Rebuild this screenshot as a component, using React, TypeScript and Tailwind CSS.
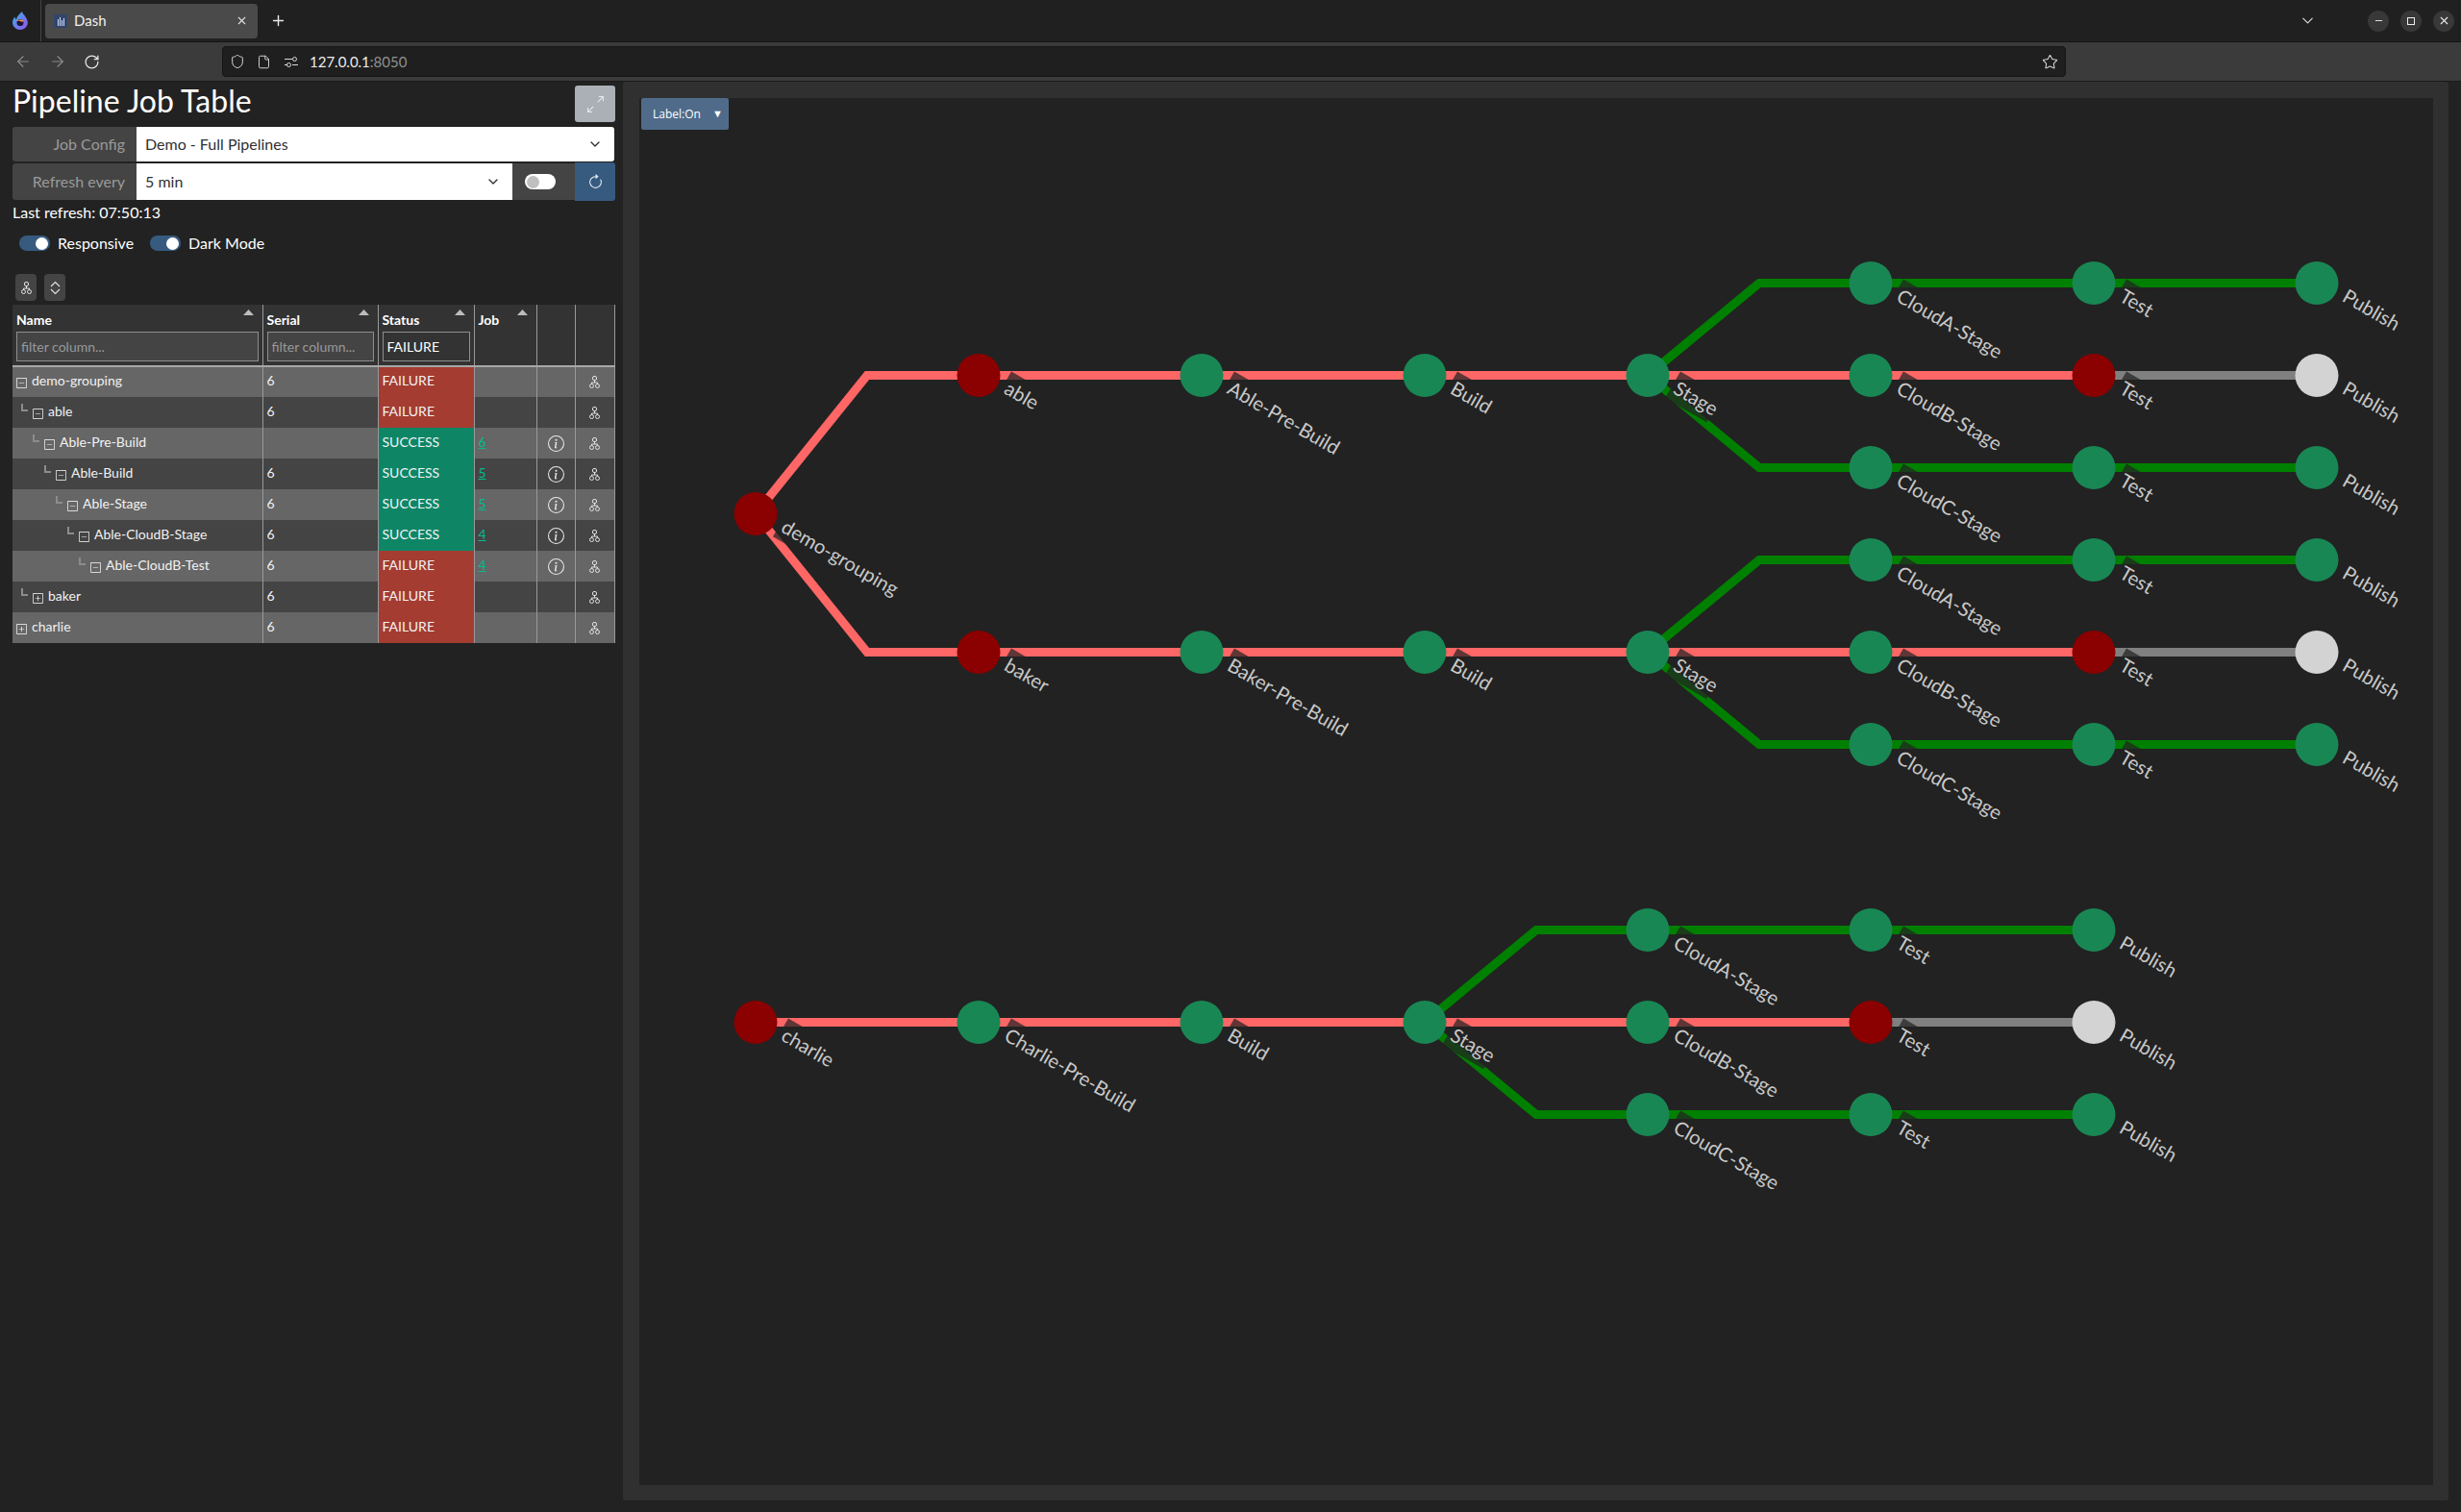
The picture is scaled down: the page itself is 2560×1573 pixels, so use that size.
import React from "react";
import { ArrowLeft, ArrowRight, ChevronDown, File, Minus, Plus, RotateCw, Shield, Star, X } from "lucide-react";
import { BsArrowClockwise, BsArrowsAngleExpand, BsDashSquare, BsInfoCircle, BsPlusSquare } from "react-icons/bs";

type Row = { name: string; depth: number; open: boolean; serial: string; status: "FAILURE" | "SUCCESS"; job?: string };

const rows: Row[] = [
  { name: "demo-grouping", depth: 0, open: true, serial: "6", status: "FAILURE" },
  { name: "able", depth: 1, open: true, serial: "6", status: "FAILURE" },
  { name: "Able-Pre-Build", depth: 2, open: true, serial: "", status: "SUCCESS", job: "6" },
  { name: "Able-Build", depth: 3, open: true, serial: "6", status: "SUCCESS", job: "5" },
  { name: "Able-Stage", depth: 4, open: true, serial: "6", status: "SUCCESS", job: "5" },
  { name: "Able-CloudB-Stage", depth: 5, open: true, serial: "6", status: "SUCCESS", job: "4" },
  { name: "Able-CloudB-Test", depth: 6, open: true, serial: "6", status: "FAILURE", job: "4" },
  { name: "baker", depth: 1, open: false, serial: "6", status: "FAILURE" },
  { name: "charlie", depth: 0, open: false, serial: "6", status: "FAILURE" },
];

const RED = "#ff6666";
const GREEN = "#008000";
const GRAY = "#808080";
const NGREEN = "#198754";
const NRED = "#8b0000";
const NWHITE = "#d3d3d3";

type Edge = { d: string; c: string };
type Node = { x: number; y: number; c: string; label: string };

const edges: Edge[] = [];
const nodes: Node[] = [];

function link(x1: number, y1: number, x2: number, y2: number, c: string) {
  const mx = x1 + 116;
  edges.push({ d: y1 === y2 ? `M${x1} ${y1}L${x2} ${y2}` : `M${x1} ${y1}L${mx} ${y2}L${x2} ${y2}`, c });
}

function pipeline(x: number, y: number, pre: string, head: string) {
  nodes.push({ x, y, c: NRED, label: head });
  const px = x + 232;
  const bx = px + 232;
  const sx = bx + 232;
  nodes.push({ x: px, y, c: NGREEN, label: pre });
  nodes.push({ x: bx, y, c: NGREEN, label: "Build" });
  nodes.push({ x: sx, y, c: NGREEN, label: "Stage" });
  link(x, y, px, y, RED);
  link(px, y, bx, y, RED);
  link(bx, y, sx, y, RED);
  const cx = sx + 232;
  const tx = cx + 232;
  const ux = tx + 232;
  [
    { n: "CloudA-Stage", dy: -96, ok: true },
    { n: "CloudB-Stage", dy: 0, ok: false },
    { n: "CloudC-Stage", dy: 96, ok: true },
  ].forEach((b) => {
    const by = y + b.dy;
    link(sx, y, cx, by, b.ok ? GREEN : RED);
    link(cx, by, tx, by, b.ok ? GREEN : RED);
    link(tx, by, ux, by, b.ok ? GREEN : GRAY);
    nodes.push({ x: cx, y: by, c: NGREEN, label: b.n });
    nodes.push({ x: tx, y: by, c: b.ok ? NGREEN : NRED, label: "Test" });
    nodes.push({ x: ux, y: by, c: b.ok ? NGREEN : NWHITE, label: "Publish" });
  });
}

nodes.push({ x: 786, y: 534.5, c: NRED, label: "demo-grouping" });
link(786, 534.5, 1018, 390.5, RED);
link(786, 534.5, 1018, 678.5, RED);
pipeline(1018, 390.5, "Able-Pre-Build", "able");
pipeline(1018, 678.5, "Baker-Pre-Build", "baker");
pipeline(786, 1063.5, "Charlie-Pre-Build", "charlie");

function Graph() {
  return (
    <svg viewBox="665 102 1866 1443" className="block h-full w-full font-[Lato,sans-serif]">
      {edges.map((e, i) => (
        <path key={i} d={e.d} fill="none" stroke={e.c} strokeWidth={9} strokeLinejoin="miter" />
      ))}
      {nodes.map((n, i) => (
        <circle key={i} cx={n.x} cy={n.y} r={22.5} fill={n.c} />
      ))}
      {nodes.map((n, i) => (
        <g key={i} transform={`translate(${n.x + 34} ${n.y - 4}) rotate(30)`}>
          <rect x={0} y={0} width={n.label.length * 10} height={32} fill="#222222" fillOpacity={0.72} />
          <text x={3.5} y={23.4} fontSize={20.3} fill="#c8c8c8">
            {n.label}
          </text>
        </g>
      ))}
    </svg>
  );
}

function Tri() {
  return (
    <svg width="11" height="6" viewBox="0 0 11 6" className="absolute right-[9px] top-[5px]">
      <polygon points="5.5,0 11,6 0,6" fill="#bdbdbd" />
    </svg>
  );
}

function TreeIcon({ className }: { className?: string }) {
  return (
    <svg width="11" height="13" viewBox="0 0 11 13" fill="none" stroke="currentColor" strokeWidth="1" className={className}>
      <rect x="3.5" y="0.5" width="4" height="4" rx="1.500" />
      <path d="M5.500 4.500V7M2.500 8.500V7H8.500V8.500" />
      <circle cx="2.500" cy="10.500" r="2" />
      <circle cx="8.500" cy="10.500" r="2" />
    </svg>
  );
}

function ExpandIcon() {
  return (
    <svg width="11" height="15" viewBox="0 0 11 15" fill="none" stroke="currentColor" strokeWidth="1.100">
      <path d="M1 6L5.500 1.500L10 6M1 9L5.500 13.500L10 9" />
    </svg>
  );
}

function HeaderCell({ label, value, width, placeholder }: { label?: string; value?: string; width: string; placeholder?: boolean }) {
  return (
    <th className={`relative border-r border-[#999] p-0 align-top font-bold ${width}`}>
      {label && (
        <>
          <div className="pl-[4px] pt-[7px] text-left text-[14px] leading-[17px] text-white">{label}</div>
          <Tri />
        </>
      )}
      {placeholder && (
        <div className="mt-[4px] px-[4px]">
          <input
            readOnly
            value={value ?? ""}
            placeholder="filter column..."
            className={`block h-[31px] w-full border border-[#8e8e8e] px-[4px] text-[14px] font-normal text-white outline-none placeholder:text-[#999] ${value ? "bg-[#333]" : "bg-[#444]"}`}
          />
        </div>
      )}
    </th>
  );
}

function Switch({ label }: { label: string }) {
  return (
    <div className="flex items-center gap-[8px]">
      <span className="flex h-[16px] w-[32px] items-center justify-end rounded-full bg-[#375a7f] pr-[2px]">
        <span className="h-[13px] w-[13px] rounded-full bg-white" />
      </span>
      <span className="text-[16px] leading-[20px] text-white">{label}</span>
    </div>
  );
}

function FirefoxLogo() {
  return (
    <svg width="16" height="19" viewBox="0 0 16 19">
      <defs>
        <linearGradient id="ff" x1="0" y1="0" x2="1" y2="1">
          <stop offset="0" stopColor="#2fb8e8" />
          <stop offset="1" stopColor="#9a4ff0" />
        </linearGradient>
      </defs>
      <path d="M10 0c0 2 2 3 3.5 5.5C15 8 16 10 15.8 12c-.4 4-3.7 7-7.8 7s-8-3.400-8-7.500C0 9 1 7 2.500 5.500 2.700 7 3.200 7.800 4 8.200 4.500 5 7 3 10 0z" fill="url(#ff)" />
      <circle cx="8" cy="11.500" r="3.500" fill="#20123a" />
      <path d="M4 10c2-2 6-2 8 0-1 .5-2 .7-3 .5L7 9.500z" fill="#ff9a3c" />
    </svg>
  );
}

function Favicon() {
  return (
    <span className="flex h-[14px] w-[14px] items-end justify-center gap-[1px] rounded-[1px] bg-[#33456a] pb-[2px]">
      <span className="h-[7px] w-[1px] bg-[#cfe0ff]" />
      <span className="h-[9px] w-[1px] bg-[#cfe0ff]" />
      <span className="h-[6px] w-[1px] bg-[#cfe0ff]" />
      <span className="h-[8px] w-[1px] bg-[#cfe0ff]" />
    </span>
  );
}

function Sliders() {
  return (
    <svg width="14" height="12" viewBox="0 0 14 12" fill="none" stroke="#d8d8d8" strokeWidth="1">
      <path d="M0 3.500h8M0 9.500h3" />
      <circle cx="10.500" cy="3.500" r="2" />
      <circle cx="4.500" cy="9.500" r="2" />
      <path d="M8 9.500h6" />
    </svg>
  );
}

export default function App() {
  return (
    <div className="flex h-[1573px] w-[2560px] flex-col overflow-hidden bg-[#222222] font-[Lato,sans-serif] text-white">
      {/* browser tabs */}
      <header className="flex h-[44px] items-center border-b border-[#141414] bg-[#202020]">
        <div className="flex h-full w-[43px] items-center justify-center border-r border-[#444]">
          <FirefoxLogo />
        </div>
        <div className="ml-[4px] flex h-[36px] w-[221px] items-center rounded-[4px] bg-[#4a4a4a] pl-[9px] pr-[10px]">
          <Favicon />
          <span className="ml-[7px] flex-1 text-[15px] text-[#f0f0f0]">Dash</span>
          <X size={13} className="text-[#e0e0e0]" />
        </div>
        <Plus size={17} className="ml-[13px] text-[#e8e8e8]" />
        <div className="flex-1" />
        <ChevronDown size={19} strokeWidth={1.500} className="mr-[53px] text-[#d8d8d8]" />
        <div className="flex items-center gap-[12px] pr-[7px]">
          <span className="flex h-[22px] w-[22px] items-center justify-center rounded-full bg-[#383838]">
            <Minus size={11} className="text-[#eee]" />
          </span>
          <span className="flex h-[22px] w-[22px] items-center justify-center rounded-full bg-[#383838]">
            <span className="h-[8px] w-[8px] border border-[#eee]" />
          </span>
          <span className="flex h-[22px] w-[22px] items-center justify-center rounded-full bg-[#383838]">
            <X size={13} className="text-[#eee]" />
          </span>
        </div>
      </header>

      {/* browser nav */}
      <nav className="flex h-[41px] items-center border-b border-[#1a1a1a] bg-[#3b3b3b]">
        <div className="flex w-[231px] items-center gap-[18px] pl-[15px]">
          <ArrowLeft size={18} strokeWidth={1.500} className="text-[#8c8c8c]" />
          <ArrowRight size={18} strokeWidth={1.500} className="text-[#8c8c8c]" />
          <RotateCw size={17} strokeWidth={1.800} className="text-[#e8e8e8]" />
        </div>
        <div className="flex h-[32px] w-[1918px] items-center rounded-[4px] border border-[#151515] bg-[#1f1f1f] pl-[7px] pr-[7px]">
          <Shield size={16} strokeWidth={1.500} className="text-[#d8d8d8]" />
          <File size={15} strokeWidth={1.500} className="ml-[12px] text-[#d8d8d8]" />
          <span className="ml-[14px]">
            <Sliders />
          </span>
          <span className="ml-[12px] text-[15px] text-[#ececec]">
            127.0.0.1<span className="text-[#8f8f8f]">:8050</span>
          </span>
          <div className="flex-1" />
          <Star size={17} strokeWidth={1.500} className="text-[#d8d8d8]" />
        </div>
      </nav>

      <main className="flex min-h-0 flex-1">
        {/* left column */}
        <aside className="w-[648px] shrink-0 pl-[13px] pr-[8px]">
          <div className="flex h-[47px] items-start justify-between">
            <h1 className="text-[32px] font-normal leading-[40px] text-white">Pipeline Job Table</h1>
            <button className="mt-[4px] flex h-[38px] w-[42px] items-center justify-center rounded-[3px] bg-[#aab0b6] text-[#e8eaec]">
              <BsArrowsAngleExpand size={17} />
            </button>
          </div>

          <div className="flex h-[36px] w-[626px] overflow-hidden rounded-[3px]">
            <div className="flex w-[129px] items-center justify-end bg-[#444] pr-[12px] text-[16px] text-[#9a9a9a]">Job Config</div>
            <div className="flex flex-1 items-center justify-between bg-white pl-[9px] pr-[12px] text-[16px] text-[#303030]">
              Demo - Full Pipelines
              <ChevronDown size={16} strokeWidth={2} className="text-[#303030]" />
            </div>
          </div>

          <div className="mt-[1px] flex h-[40px]">
            <div className="my-[1px] flex w-[129px] items-center justify-end rounded-l-[3px] bg-[#444] pr-[12px] text-[16px] text-[#9a9a9a]">Refresh every</div>
            <div className="my-[1px] flex w-[391px] items-center justify-between bg-white pl-[9px] pr-[12px] text-[16px] text-[#303030]">
              5 min
              <ChevronDown size={16} strokeWidth={2} className="text-[#303030]" />
            </div>
            <div className="my-[1px] flex w-[65px] items-center bg-[#444] pl-[13px]">
              <span className="flex h-[16px] w-[32px] items-center rounded-full bg-white pl-[2px]">
                <span className="h-[13px] w-[13px] rounded-full bg-[#bfbfbf]" />
              </span>
            </div>
            <button className="flex w-[42px] items-center justify-center rounded-r-[3px] bg-[#375a7f] text-[#e8eef5]">
              <BsArrowClockwise size={17} />
            </button>
          </div>

          <div className="mt-[2px] text-[16px] leading-[20px] text-white">Last refresh: 07:50:13</div>

          <div className="ml-[7px] mt-[12px] flex h-[20px] items-center gap-[17px]">
            <Switch label="Responsive" />
            <Switch label="Dark Mode" />
          </div>

          <div className="ml-[3px] mt-[22px] flex gap-[8px]">
            <button className="flex h-[28px] w-[22px] items-center justify-center rounded-[4px] bg-[#444] text-[#e4e4e4]">
              <TreeIcon />
            </button>
            <button className="flex h-[28px] w-[22px] items-center justify-center rounded-[4px] bg-[#444] text-[#e4e4e4]">
              <ExpandIcon />
            </button>
          </div>

          <table className="mt-[4px] w-[626px] table-fixed border-collapse text-[14px] text-[#f2f2f2]">
            <thead>
              <tr className="h-[64px] border-b-2 border-[#a8a8a8] bg-[#333]">
                <HeaderCell label="Name" width="w-[260px]" placeholder />
                <HeaderCell label="Serial" width="w-[120px]" placeholder />
                <HeaderCell label="Status" width="w-[100px]" placeholder value="FAILURE" />
                <HeaderCell label="Job" width="w-[65px]" />
                <HeaderCell width="w-[40px]" />
                <HeaderCell width="w-[41px]" />
              </tr>
            </thead>
            <tbody>
              {rows.map((r, i) => {
                const stripe = i % 2 === 0 ? "bg-[#666666]" : "bg-[#444444]";
                return (
                  <tr key={r.name} className={`h-[32px] ${stripe}`}>
                    <td className="border-r border-[#999] p-0">
                      <div className="flex items-center pb-[4px]" style={{ paddingLeft: r.depth === 0 ? 4 : 9 + r.depth * 12 }}>
                        <span className="relative top-[3px] block h-[11px] w-[11px]">
                          {r.depth > 0 && <span className="absolute -left-[12px] -top-[5px] h-[8px] w-[7px] border-b-2 border-l-2 border-[#8c8c8c]" />}
                          {r.open ? <BsDashSquare size={11} className="text-white" /> : <BsPlusSquare size={11} className="text-white" />}
                        </span>
                        <span className="ml-[5px] leading-[17px]">{r.name}</span>
                      </div>
                    </td>
                    <td className="border-r border-[#999] px-[4px] pb-[4px] pt-0">{r.serial}</td>
                    <td className={`border-r border-[#999] px-[4px] pb-[4px] pt-0 ${r.status === "FAILURE" ? "bg-[#a43c32]" : "bg-[#0e8666]"}`}>{r.status}</td>
                    <td className="border-r border-[#999] px-[4px] pb-[4px] pt-0">
                      {r.job && <a className="text-[#00bc8c] underline">{r.job}</a>}
                    </td>
                    <td className="border-r border-[#999] p-0">
                      {r.job && <BsInfoCircle size={17} className="mx-auto text-[#e8e8e8]" />}
                    </td>
                    <td className="border-r border-[#999] p-0">
                      <TreeIcon className="mx-auto text-[#e0e0e0]" />
                    </td>
                  </tr>
                );
              })}
            </tbody>
          </table>
        </aside>

        {/* graph card */}
        <section className="mb-[12px] mr-[13px] flex-1 rounded-[3px] bg-[#303030] pb-[16px] pl-[17px] pr-[16px] pt-[17px]">
          <div className="relative h-full w-full bg-[#222222]">
            <Graph />
            <button className="absolute left-[2px] top-0 flex h-[33px] w-[91px] items-center justify-between rounded-[2px] bg-[#506b8a] pl-[12px] pr-[6px] font-['Open_Sans',sans-serif] text-[12px] text-white">
              Label:On
              <span className="text-[11px]">▼</span>
            </button>
          </div>
        </section>
      </main>
    </div>
  );
}
